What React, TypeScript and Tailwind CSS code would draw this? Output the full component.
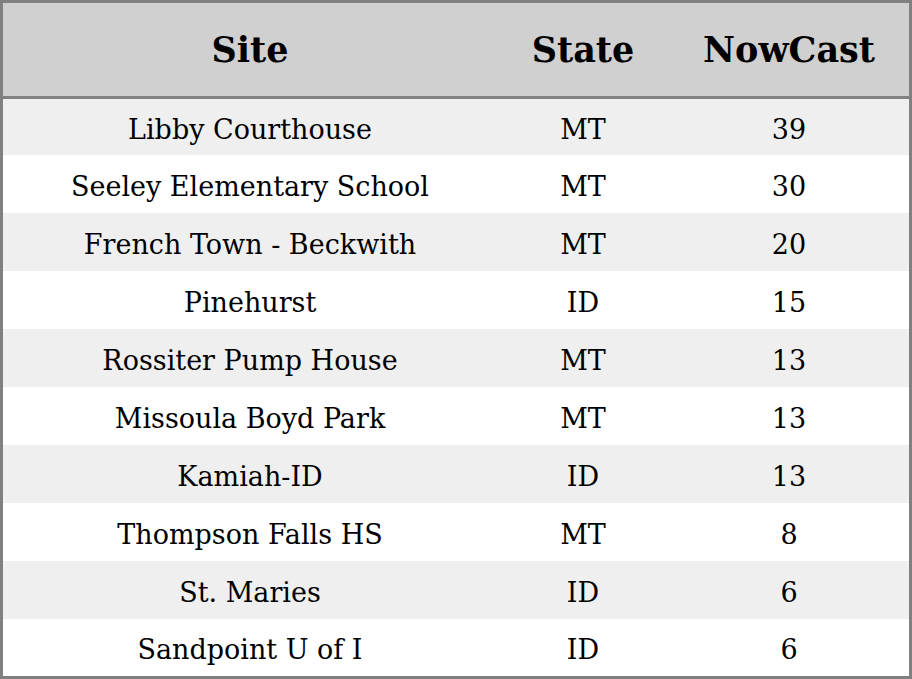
const rows = [
  { site: "Libby Courthouse", state: "MT", nowcast: 39 },
  { site: "Seeley Elementary School", state: "MT", nowcast: 30 },
  { site: "French Town - Beckwith", state: "MT", nowcast: 20 },
  { site: "Pinehurst", state: "ID", nowcast: 15 },
  { site: "Rossiter Pump House", state: "MT", nowcast: 13 },
  { site: "Missoula Boyd Park", state: "MT", nowcast: 13 },
  { site: "Kamiah-ID", state: "ID", nowcast: 13 },
  { site: "Thompson Falls HS", state: "MT", nowcast: 8 },
  { site: "St. Maries", state: "ID", nowcast: 6 },
  { site: "Sandpoint U of I", state: "ID", nowcast: 6 },
];

export default function App() {
  return (
    <div className="w-[912px] h-[679px] bg-white text-black font-['DejaVu_Serif',serif] border-[3px] border-[#808080] flex flex-col">
      {/* header */}
      <div className="grid grid-cols-[494px_172px_1fr] items-center bg-[#d0d0d0] h-[96px] border-b-[3px] border-[#808080] text-[35px] font-bold text-center pt-[2px]">
        <div>Site</div>
        <div>State</div>
        <div>NowCast</div>
      </div>
      {rows.map((r, i) => (
        <div
          key={r.site}
          className={
            "grid grid-cols-[494px_172px_1fr] items-center text-center text-[27px] pt-[6px] " +
            (i % 2 === 0 ? "bg-[#efefef] " : "bg-white ") +
            (i === 0 ? "h-[56px]" : i === rows.length - 1 ? "h-[57px]" : "h-[58px]")
          }
        >
          <div>{r.site}</div>
          <div>{r.state}</div>
          <div>{r.nowcast}</div>
        </div>
      ))}
    </div>
  );
}
